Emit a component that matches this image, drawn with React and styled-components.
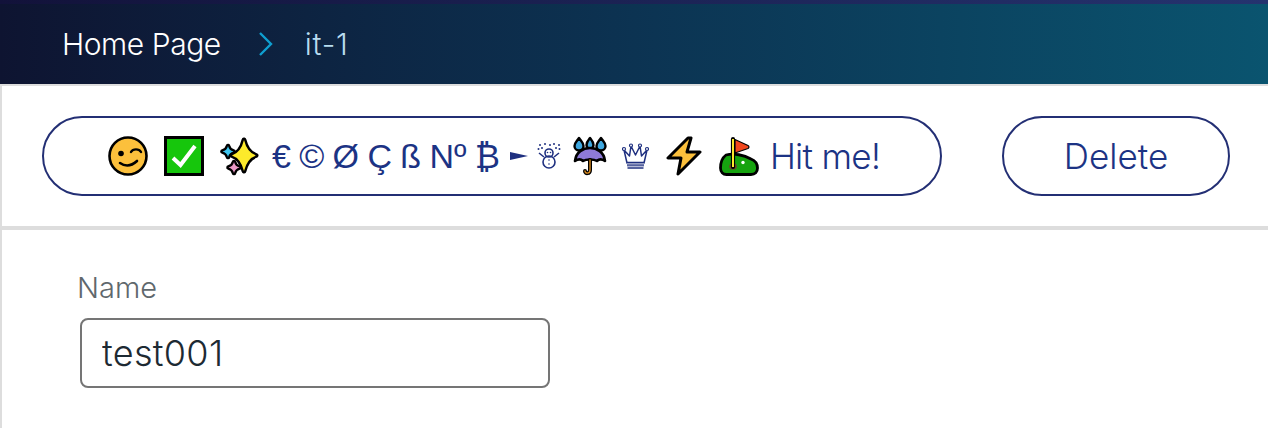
import styled, { createGlobalStyle } from 'styled-components';

const GlobalStyle = createGlobalStyle`
  html, body {
    margin: 0;
    padding: 0;
    background: #fff;
  }
  body {
    font-family: Inter, "Liberation Sans", sans-serif;
    overflow: hidden;
  }
`;

const Page = styled.div`
  width: 1268px;
  height: 428px;
  overflow: hidden;
  display: flex;
  flex-direction: column;
`;

const TopBar = styled.header`
  height: 80px;
  border-top: 4px solid #1b2a63;
  border-image: linear-gradient(90deg, #12123a, #25336f) 1;
  background: linear-gradient(90deg, #0e1431 0%, #0c3352 50%, #0a546f 100%);
  display: flex;
  align-items: center;
  padding: 0 0 0 62px;
  box-sizing: content-box;
`;

const Crumb = styled.span`
  font-size: 30px;
  font-weight: 350;
  letter-spacing: ${p => (p.$current ? '0.8px' : '-0.45px')};
  color: ${p => (p.$current ? '#b9dcf0' : '#fff')};
`;

const Chevron = styled.svg`
  width: 16px;
  height: 24px;
  margin: 0 31px 0 37px;
  fill: none;
  stroke: #0f9fd0;
  stroke-width: 2.4;
`;

const Content = styled.main`
  flex: 1;
  border-top: 2px solid #ddd;
  border-left: 2px solid #ddd;
  display: flex;
  flex-direction: column;
`;

const Toolbar = styled.div`
  height: 144px;
  box-sizing: border-box;
  border-bottom: 4px solid #ddd;
  padding-top: 30px;
  padding-left: 40px;
  display: flex;
  align-items: flex-start;
  gap: 60px;
`;

const PillButton = styled.button`
  width: ${p => p.$width}px;
  height: 80px;
  box-sizing: border-box;
  border: 2px solid #232f74;
  border-radius: 40px;
  background: #fff;
  color: #1c3384;
  font-family: inherit;
  font-size: 35px;
  font-weight: 300;
  display: flex;
  align-items: center;
  justify-content: center;
  padding: 0 0 0 ${p => p.$shift || 0}px;
`;

const HitLabel = styled.span`
  letter-spacing: -0.7px;
`;

const Emoji = styled.svg`
  width: ${p => p.$w || 40}px;
  height: ${p => p.$h || 40}px;
  flex: none;
  margin-right: ${p => p.$gap || 0}px;
`;

const Glyphs = styled.span`
  white-space: pre;
  font-family: "Liberation Sans", Arial, sans-serif;
  font-size: 34px;
  font-weight: 400;
  word-spacing: -1.1px;
  margin-right: 10px;
`;

const Arrow = styled.span`
  width: 0;
  height: 0;
  border-left: 18px solid #1f3080;
  border-top: 4px solid transparent;
  border-bottom: 4px solid transparent;
  margin-right: 9px;
`;

const Form = styled.form`
  padding: 40px 0 0 75px;
  display: flex;
  flex-direction: column;
  align-items: flex-start;
`;

const Label = styled.label`
  font-size: 29px;
  font-weight: 300;
  color: #5f686d;
  line-height: 34px;
  margin-top: 1px;
  margin-bottom: 13px;
`;

const Input = styled.input`
  width: 470px;
  height: 70px;
  margin-left: 3px;
  box-sizing: border-box;
  border: 2px solid #757575;
  border-radius: 8px;
  padding: 0 20px;
  font-family: inherit;
  font-size: 36px;
  font-weight: 300;
  letter-spacing: 0.3px;
  color: #1d2a33;
  outline: none;
`;

const Wink = () => (
  <Emoji viewBox="0 0 40 40" $gap={16}>
    <circle cx="20" cy="20" r="18.500" fill="#fcc03c" stroke="#000" strokeWidth="2.600" />
    <circle cx="13" cy="17.500" r="2.800" fill="#000" />
    <path d="M23 16c2-3.500 8-3.500 10 0" fill="none" stroke="#000" strokeWidth="2.400" strokeLinecap="round" />
    <path d="M12 27c5 3.500 11 3.500 17-2" fill="none" stroke="#000" strokeWidth="2.600" strokeLinecap="round" />
  </Emoji>
);

const Check = () => (
  <Emoji viewBox="0 0 40 40" $gap={16}>
    <rect x="1.500" y="1.500" width="37" height="37" fill="#16c60c" stroke="#000" strokeWidth="3" />
    <path d="M9 22l7.500 7L31 10" fill="none" stroke="#fff" strokeWidth="4" />
  </Emoji>
);

// four-point star: black round outline drawn under the colour so the tips stay blunt
const Star = ({ cx, cy, rx, ry, k, color, outline }) => {
  const d = `M${cx} ${cy - ry}Q${cx + k} ${cy - k} ${cx + rx} ${cy}Q${cx + k} ${cy + k} ${cx} ${cy + ry}Q${cx - k} ${cy + k} ${cx - rx} ${cy}Q${cx - k} ${cy - k} ${cx} ${cy - ry}z`;
  return (
    <>
      <path d={d} fill="#000" stroke="#000" strokeWidth={outline} strokeLinejoin="round" />
      <path d={d} fill={color} />
    </>
  );
};

const Sparkles = () => (
  <Emoji viewBox="0 0 40 40" $gap={12}>
    <Star cx={8} cy={15.500} rx={5.500} ry={5.500} k={1} color="#3fc6f0" outline={4.600} />
    <Star cx={14} cy={31.500} rx={5.500} ry={5.500} k={1} color="#ea9ac6" outline={4.600} />
    <Star cx={24} cy={19.500} rx={12} ry={15.500} k={3} color="#fcea2b" outline={5} />
  </Emoji>
);

const Snowman = () => (
  <Emoji viewBox="0 0 24 26" $w={24} $h={26} $gap={12}>
    <g fill="none" stroke="#1f3080" strokeWidth="1.600">
      <circle cx="12" cy="10" r="4" />
      <circle cx="12" cy="19" r="6" />
      <path d="M7 14L2 10M17 14l5-4" />
    </g>
    <g fill="#1f3080">
      <circle cx="10.500" cy="9.500" r=".8" /><circle cx="13.500" cy="9.500" r=".8" />
      <circle cx="12" cy="17" r=".8" /><circle cx="12" cy="21" r=".8" />
      <circle cx="3" cy="2" r="1" /><circle cx="8" cy="1" r="1" /><circle cx="13" cy="2" r="1" />
      <circle cx="17" cy="1" r="1" /><circle cx="22" cy="2" r="1" /><circle cx="1.500" cy="6" r="1" />
      <circle cx="5" cy="5" r="1" /><circle cx="19" cy="5" r="1" /><circle cx="22.500" cy="6" r="1" />
    </g>
  </Emoji>
);

const Umbrella = () => (
  <Emoji viewBox="0 0 34 40" $w={34} $gap={15}>
    <g fill="#3fa8e0" stroke="#000" strokeWidth="2.400" strokeLinejoin="round">
      <path d="M6 2c2 3 4.500 5 4.500 8a4.500 4.500 0 0 1-9 0c0-3 2.500-5 4.500-8z" />
      <path d="M28 2c2 3 4.500 5 4.500 8a4.500 4.500 0 0 1-9 0c0-3 2.500-5 4.500-8z" />
      <path d="M17 2c2 2.500 3.500 4 3.500 7a3.500 3.500 0 0 1-7 0c0-3 1.500-4.500 3.500-7z" />
    </g>
    <path d="M2 25C3 16 10 12 17 12s14 4 15 13c-3-2-6-2-8 0-3-2-11-2-14 0-2-2-5-2-8 0z" fill="#8e7ad8" stroke="#000" strokeWidth="2.600" strokeLinejoin="round" />
    <path d="M17 24v10c0 4-5 4-5 1" fill="none" stroke="#000" strokeWidth="4" strokeLinecap="round" />
    <path d="M17 24v10c0 4-5 4-5 1" fill="none" stroke="#d98a1e" strokeWidth="1.400" strokeLinecap="round" />
  </Emoji>
);

const Crown = () => (
  <Emoji viewBox="0 0 27 26" $w={27} $h={26} $gap={17}>
    <path d="M5 20L2 7l5.500 6L9 3l4.500 9L18 3l1.500 10L25 7l-3 13z" fill="#fff" stroke="#1f3080" strokeWidth="1.500" strokeLinejoin="round" />
    <g fill="#fff" stroke="#1f3080" strokeWidth="1.200">
      <circle cx="2" cy="6" r="1.500" />
      <circle cx="9" cy="2.500" r="1.500" />
      <circle cx="18" cy="2.500" r="1.500" />
      <circle cx="25" cy="6" r="1.500" />
    </g>
    <path d="M5 19.500h17M5 22h17M5.500 25h16" stroke="#1f3080" strokeWidth="1.600" />
    <path d="M5 20.800h17M5 23.500h17" stroke="#b7bcd8" strokeWidth="1" />
  </Emoji>
);

const Bolt = () => (
  <Emoji viewBox="0 0 36 40" $w={36} $gap={17}>
    <path d="M22 2L2 22h13l-3 16 22-22H21l4-14z" fill="#fcc03c" stroke="#000" strokeWidth="3" strokeLinejoin="round" />
  </Emoji>
);

const Golf = () => (
  <Emoji viewBox="0 0 40 40" $gap={11}>
    <path d="M7 19C15 17 25 19 32 23C37 25 38.500 29 38.500 32C38.500 36 36 38.500 32 38.500H7.500C4 38.500 1.500 36 1.500 32C1.500 27 3 22 7 19z" fill="#16a30f" stroke="#000" strokeWidth="2.800" strokeLinejoin="round" />
    <ellipse cx="14" cy="30.500" rx="3.800" ry="3.200" fill="#6a4a2a" />
    <circle cx="24" cy="26.500" r="1.700" fill="#fff" />
    <path d="M14 31V3" stroke="#000" strokeWidth="4.200" strokeLinecap="round" />
    <path d="M14 31V3" stroke="#fcea2b" strokeWidth="2" />
    <path d="M16 3.500L29 9.500c1.500 1 1 2.500 0 3L16 17z" fill="#f1471d" stroke="#000" strokeWidth="1.200" strokeLinejoin="round" />
  </Emoji>
);

const App = () => (
  <Page>
    <GlobalStyle />
    <TopBar>
      <Crumb>Home Page</Crumb>
      <Chevron viewBox="0 0 16 24">
        <path d="M2 1l11 11L2 23" />
      </Chevron>
      <Crumb $current>it-1</Crumb>
    </TopBar>
    <Content>
      <Toolbar>
        <PillButton type="button" $width={900} $shift={4}>
          <Wink />
          <Check />
          <Sparkles />
          <Glyphs>€ © Ø Ç ß Nº ₿</Glyphs>
          <Arrow />
          <Snowman />
          <Umbrella />
          <Crown />
          <Bolt />
          <Golf />
          <HitLabel>Hit me!</HitLabel>
        </PillButton>
        <PillButton type="button" $width={228}>Delete</PillButton>
      </Toolbar>
      <Form>
        <Label>Name</Label>
        <Input defaultValue="test001" />
      </Form>
    </Content>
  </Page>
);

export default App;
